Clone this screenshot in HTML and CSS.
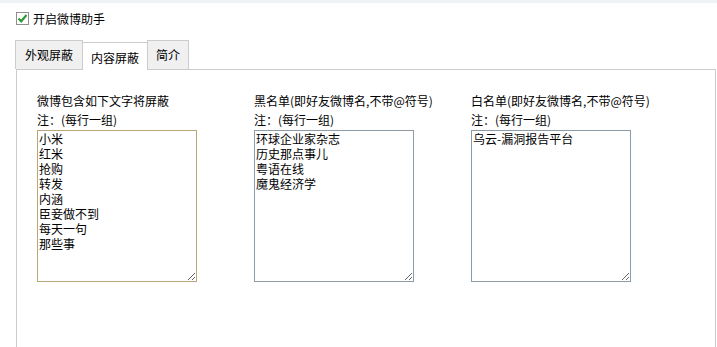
FILE: index.html
```html
<!DOCTYPE html>
<html lang="zh-CN">
<head>
    <meta charset="UTF-8">
    <meta name="viewport" content="width=device-width, initial-scale=1.0">
    <title>微博助手设置</title>
    <link rel="stylesheet" href="styles.css">
</head>
<body>

    <div class="topbar"></div>

    <label class="toggle">
        <span class="check">
            <svg width="11" height="11" viewBox="0 0 11 11">
                <path d="M1.5 5.5 L4.2 8.3 L9.5 2" fill="none" stroke="#2f9a3a" stroke-width="2.2"/>
            </svg>
        </span>
        开启微博助手
    </label>

    <div class="tabs">
        <span class="tab">外观屏蔽</span>
        <span class="tab active">内容屏蔽</span>
        <span class="tab">简介</span>
    </div>

    <div class="panel">
        <div class="columns">
            <div class="col">
                <div class="label">微博包含如下文字将屏蔽</div>
                <div class="label note">注：(每行一组)</div>
                <textarea class="list focused">小米
红米
抢购
转发
内涵
臣妾做不到
每天一句
那些事</textarea>
            </div>
            <div class="col">
                <div class="label">黑名单(即好友微博名,不带@符号)</div>
                <div class="label note">注：(每行一组)</div>
                <textarea class="list">环球企业家杂志
历史那点事儿
粤语在线
魔鬼经济学</textarea>
            </div>
            <div class="col">
                <div class="label">白名单(即好友微博名,不带@符号)</div>
                <div class="label note">注：(每行一组)</div>
                <textarea class="list">乌云-漏洞报告平台</textarea>
            </div>
        </div>
    </div>

</body>
</html>
```

FILE: styles.css
```css
body {
    margin: 0;
    font-family: "Noto Sans CJK SC", "Liberation Sans", sans-serif;
    font-size: 12px;
    color: #000;
    background-color: #fff;
}
.topbar {
    height: 3px;
    background-color: #eef2f6;
}
.toggle {
    display: flex;
    align-items: center;
    gap: 4px;
    height: 13px;
    line-height: 13px;
    padding: 9px 16px 0;
}
.check {
    width: 11px;
    height: 11px;
    border: 1px solid #8f8f8f;
    background-color: #fff;
    display: flex;
}
.tabs {
    display: flex;
    align-items: flex-end;
    height: 29px;
    margin-top: 15px;
    padding-left: 15px;
}
.tab {
    height: 28px;
    line-height: 28px;
    padding: 0 8px;
    border: 1px solid #ccc;
    border-bottom: none;
    background-color: #f0f0f0;
}
.tab:first-child {
    padding: 0 9px;
}
.tab + .tab {
    margin-left: -1px;
}
.tab.active {
    position: relative;
    z-index: 1;
    height: 24px;
    line-height: 24px;
    padding-top: 3px;
    margin-bottom: -1px;
    background-color: #fff;
}
.panel {
    margin-left: 16px;
    width: 700px;
    height: 290px;
    box-sizing: border-box;
    border: 1px solid #ccc;
    border-bottom: none;
    padding: 21px 20px;
}
.columns {
    display: flex;
}
.col {
    width: 217px;
}
.label {
    line-height: 19px;
    white-space: nowrap;
}
.note {
    margin-bottom: 1px;
}
.list {
    display: block;
    margin: 0;
    width: 160px;
    height: 152px;
    box-sizing: border-box;
    padding: 0 1px;
    border: 1px solid #8c9ba5;
    font-family: "Noto Sans CJK SC", "Liberation Sans", sans-serif;
    font-size: 12px;
    line-height: 15px;
    color: #000;
    outline: none;
}
.list.focused {
    border-color: #b9a77a;
}
```
